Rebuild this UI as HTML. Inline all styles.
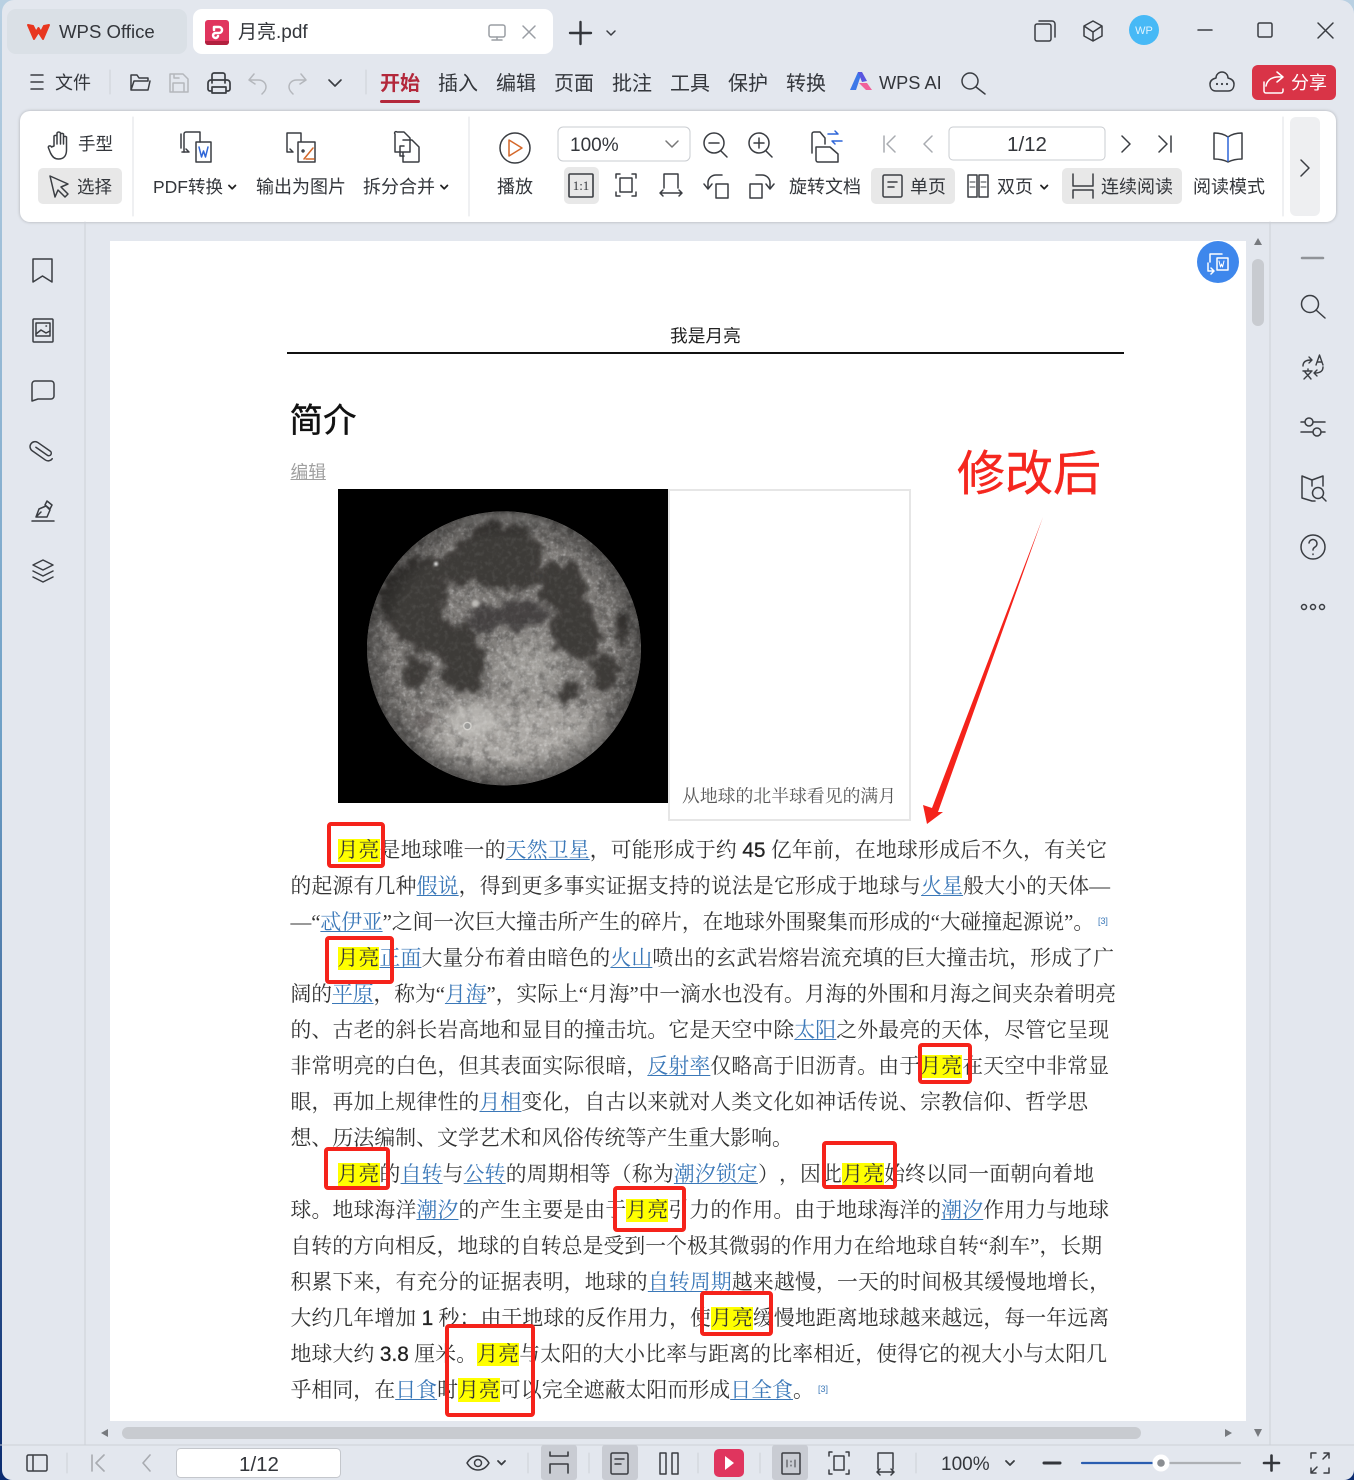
<!DOCTYPE html>
<html lang="zh-CN"><head><meta charset="utf-8"><title>月亮.pdf</title>
<style>
html,body{margin:0;padding:0}
body{width:1354px;height:1480px;overflow:hidden;position:relative;background:linear-gradient(#b9d0e2,#6ea0c6 50%,#0b2c70)}
#win{position:absolute;left:1.5px;top:0;right:0;bottom:0;background:#e3e7ee;border-radius:12px 14px 10px 10px;overflow:hidden}
.abs{position:absolute}
#card{position:absolute;left:18.5px;top:111px;width:1316px;height:111px;background:#fff;border-radius:10px;box-shadow:0 0 3px rgba(0,0,0,.25)}
#page{position:absolute;left:108.5px;top:241px;width:1136px;height:1180px;background:#fff}
svg text{font-family:"Liberation Sans","Noto Sans CJK SC",sans-serif;fill:#33363b}
.l{position:absolute;height:36px;line-height:36px;white-space:nowrap;font-family:"Liberation Serif","Noto Serif CJK SC",serif;font-size:20.8px;color:#333;text-align:justify;text-align-last:justify;text-justify:inter-character;text-spacing-trim:space-all}
.l a{color:#3b78b8;text-decoration:underline;text-underline-offset:2px;text-decoration-thickness:1px}
.l b{font-family:"Liberation Sans",sans-serif;font-weight:400;color:#222;-webkit-text-stroke:.3px #222}
.l mark{color:#333;background:#ff0}
.l sup{font-family:"Liberation Sans",sans-serif;font-size:9px;line-height:0;color:#3b78b8;vertical-align:5.5px;margin-left:4px}
.r{position:absolute;border:4px solid #f5231b;border-radius:4px;box-sizing:border-box}
</style></head><body>
<div id="win">
<div id="card"></div>
<div id="page"></div>
</div>

<!-- chrome -->
<svg class="abs" style="left:0;top:0" width="1354" height="1480" viewBox="0 0 1354 1480">
<g fill="none" stroke="#3a3d42" stroke-width="1.5" stroke-linecap="round" stroke-linejoin="round">
<!-- tabs -->
<rect x="7" y="9" width="180" height="45" rx="9" fill="#dae0e6" stroke="none"/>
<rect x="193" y="9" width="360" height="45" rx="9" fill="#fff" stroke="none"/>
<path d="M28 25l6 14 4.500-7 4.500 7 6-14-5 1-3 6-2.500-4-2.500 4-3-6z" fill="#e8361f" stroke="#e8361f" stroke-width="2"/>
<rect x="205" y="20" width="24" height="25" rx="3" fill="#e0355e" stroke="none"/>
<path d="M205 41h24v1a3 3 0 0 1-3 3h-18a3 3 0 0 1-3-3z" fill="#b3203f" stroke="none"/>
<path d="M214 30v-3h5a3 3 0 0 1 0 6h-3a2.500 2.500 0 1 0 2 3" stroke="#fff" stroke-width="2.500"/>
<g stroke="#9a9ea4"><rect x="489" y="25" width="16" height="12" rx="2"/><path d="M497 37v3M492 40h10"/><path d="M523 26l12 12M535 26l-12 12"/></g>
<path d="M570 33h21M580.500 22v22" stroke="#33363b" stroke-width="2.400"/>
<path d="M607 31l4 4 4-4"/>
<!-- window right -->
<rect x="1035" y="24" width="16" height="17" rx="2"/><path d="M1039 21h13a3 3 0 0 1 3 3v13"/>
<path d="M1093 21l9 5v10l-9 5-9-5V26zM1084 26l9 6 9-6M1093 32v9"/>
<circle cx="1144" cy="30" r="15" fill="#47b9f6" stroke="none"/>
<path d="M1198 30h14"/><rect x="1258" y="23" width="14" height="14" rx="1.500"/><path d="M1318 23l15 15M1333 23l-15 15"/>
<!-- row 2 -->
<path d="M31 75h12M31 82h12M31 89h12"/>
<path d="M110 70v24M366 70v24" stroke="#ccd0d6" stroke-width="1"/>
<path d="M131 75h6l2 3h9v3h-14l-3 9zM131 90h17l2-9M131 75v15"/>
<g stroke="#b4b7bc"><path d="M170 74h13l5 5v13h-18zM173 91v-8h11v8M174 74v4h5"/>
<path d="M254 74l-5 6 6 4M249 80h9c6 0 8 4 8 7s-2 5-4 7M301 74l5 6-6 4M306 80h-9c-6 0-8 4-8 7s2 5 4 7"/></g>
<path d="M212 83v-8a2 2 0 0 1 2-2h9a2 2 0 0 1 2 2v8M211 91h-1a2 2 0 0 1-2-2v-6a3 3 0 0 1 3-3h16a3 3 0 0 1 3 3v6a2 2 0 0 1-2 2h-1M212 87h14v6h-14z" stroke-width="1.700"/>
<path d="M329 80l6 6 6-6" stroke-width="1.600"/>
<rect x="380" y="100" width="40" height="3" rx="1.500" fill="#b3283b" stroke="none"/>
<path d="M850 90l8-18h4l-6 18z" fill="#3c78e8" stroke="none"/><path d="M858 72h4l5 9-5 1z" fill="#5a56e0" stroke="none"/><path d="M859 83h8l5 7h-6z" fill="#f0609a" stroke="none"/>
<circle cx="970" cy="81" r="8"/><path d="M976 87l9 7"/>
<path d="M1216 78a6 6 0 0 1 12 0c4 1 6 3 6 6 0 4-2 7-6 7h-12c-4 0-6-3-6-7 0-3 2-5 6-6z"/>
<circle cx="1217" cy="84" r="1.100" fill="#3a3d42" stroke="none"/><circle cx="1222" cy="84" r="1.100" fill="#3a3d42" stroke="none"/><circle cx="1227" cy="84" r="1.100" fill="#3a3d42" stroke="none"/>
<rect x="1252" y="65" width="84" height="35" rx="6" fill="#d93447" stroke="none"/>
<path d="M1264 82v9a2 2 0 0 0 2 2h15a2 2 0 0 0 2-2v-2M1266 86c1-6 6-10 16-9M1277 72l6 5-6 5" stroke="#fff"/>
<!-- toolbar -->
<path d="M133 117v99M469 117v99M1283 117v99" stroke="#dfe1e4" stroke-width="1"/>
<rect x="1290" y="117" width="30" height="99" rx="6" fill="#eeeff1" stroke="none"/><path d="M1301 160l8 8-8 8"/>
<rect x="38" y="168" width="84" height="36" rx="5" fill="#e8e8e8" stroke="none"/>
<rect x="564" y="167" width="35" height="37" rx="5" fill="#e8e8e8" stroke="none"/>
<rect x="871" y="168" width="84" height="36" rx="5" fill="#e8e8e8" stroke="none"/>
<rect x="1062" y="168" width="120" height="36" rx="5" fill="#e8e8e8" stroke="none"/>
<path d="M54 146v-10a2 2 0 0 1 3 0v8-11a2 2 0 0 1 3.500 0v11-10a2 2 0 0 1 3 0v10-7a2 2 0 0 1 3 0v13c0 6-3 9-8 9-4 0-6-2-8-6l-2-5c-1-2 2-3 3-1z"/>
<path d="M50 176l18 8-7 3 7 7-3 3-7-7-3 7z"/>
<path d="M184 152v-18a2 2 0 0 1 2-2h14v10M181 148v-14"/><path d="M182 152h7l-3-3M196 142h15v20h-15z"/><path d="M199 147l2.500 10 2-6 2 6 2.500-10" stroke="#2f66d8"/>
<path d="M287 152v-19h14v9M287 152h6l-3-3M298 142h17v20h-17z"/><path d="M304 159l9-11" stroke="#d4682a"/><path d="M303 150a1 1 0 1 0 .1 0" stroke="#3a3d42"/><path d="M306 159h8" stroke="#d4682a"/>
<path d="M395 134a1 1 0 0 1 2-2h7l6 6v14h-15zM403 140h9l7 7v14a1 1 0 0 1-1 1h-15v-10"/><path d="M404 146h-4v10h4"/>
<circle cx="515" cy="148" r="15"/><path d="M509 140l13 8-13 8z" stroke="#d4682a"/>
<rect x="558" y="127" width="132" height="34" rx="5" stroke="#c9ccd0" stroke-width="1"/><path d="M666 141l6 6 6-6" stroke="#777"/>
<circle cx="714" cy="143" r="10"/><path d="M709 143h10M721 151l6 6"/>
<circle cx="759" cy="143" r="10"/><path d="M754 143h10M759 138v10M766 151l6 6"/>
<rect x="569" y="174" width="24" height="23" rx="1" stroke-width="1.600"/>
<path d="M620 174h-4v4M632 174h4v4M620 196h-4v-4M632 196h4v-4"/><rect x="620" y="178" width="12" height="14"/>
<path d="M664 188v-14h14v14M660 193h22M663 190l-3 3 3 3M679 190l3 3-3 3"/>
<rect x="716" y="184" width="12" height="14"/><path d="M708 188v-6a8 8 0 0 1 8-7h6M704 184l4 5 4-5"/>
<rect x="750" y="184" width="12" height="14"/><path d="M770 188v-6a8 8 0 0 0-8-7h-6M766 184l4 5 4-5"/>
<path d="M812 153v-19a2 2 0 0 1 2-2h6l5 6v6M823 162h-5a2 2 0 0 1-2-2v-13h14l8 7v8z"/>
<path d="M828 134h10l-3-3M842 141h-10l3 3" stroke="#2f66d8"/>
<g stroke="#a8abb0"><path d="M884 136v16M895 136l-8 8 8 8M932 136l-8 8 8 8"/></g>
<rect x="949" y="127" width="156" height="33" rx="4" stroke="#c9ccd0" stroke-width="1"/>
<path d="M1122 136l8 8-8 8M1159 136l8 8-8 8M1171 136v16"/>
<path d="M1228 137c-4-3-9-4-14-4v26c5 0 10 1 14 3 4-2 9-3 14-3v-26c-5 0-10 1-14 4z"/><path d="M1228 137v24" stroke="#2f66d8"/>
<rect x="883" y="175" width="19" height="22" rx="1.500"/><path d="M888 182h9M888 187h6"/>
<rect x="968" y="175" width="9" height="22"/><rect x="979" y="175" width="9" height="22"/><path d="M970 182h5M970 187h5M981 182h5M981 187h5" stroke-width="1"/>
<path d="M1073 174v12h20v-12M1073 198v-8h20v8"/>
<path d="M229 185.500l3.200 3.200 3.200-3.200M441 185.500l3.200 3.200 3.200-3.200M1041 185.500l3.200 3.200 3.200-3.200" stroke="#222" stroke-width="1.800"/>
<!-- sidebars -->
<path d="M85 222v1223M1270 222v1223" stroke="#cdd1d7" stroke-width="1"/>
<path d="M33 259h19v23l-9.500-6-9.500 6z"/>
<rect x="33" y="319" width="20" height="23" rx="1"/><rect x="36" y="323" width="14" height="13"/><path d="M36 334l5-4 5 3 4-2M46 326h.5"/>
<path d="M35 381h16a3 3 0 0 1 3 3v12a3 3 0 0 1-3 3H38l-6 2v-17a3 3 0 0 1 3-3z"/>
<path d="M37 452h14a2.500 2.500 0 0 0 0-5H36a5 5 0 0 0 0 10h16a5 5 0 0 0 5-5" transform="rotate(35 43 451) translate(-2 0)"/>
<path d="M32 521h22M36 517l3-8 7-3 4 4-3 7zM36 517l5-5M47 501l5 4-2 4-5-4z"/>
<path d="M43 560l10 5-10 5-10-5zM33 571l10 5 10-5M33 577l10 5 10-5"/>
<path d="M1302 258h21" stroke="#909398" stroke-width="2.500"/>
<circle cx="1310" cy="304" r="8.500"/><path d="M1316 310l9 8"/>
<path d="M1303 366c0-4 3-6 8-6M1309 357l3 3-3 3M1323 367c0 4-3 6-8 6M1317 376l-3-3 3-3M1303 371h9M1308 369v1M1304 379l7-7M1305 372l6 7M1316 365l3.500-10 3.500 10M1317 362h5" stroke-width="1.400"/>
<path d="M1301 422h4M1313 422h12M1301 432h12M1321 432h4"/><rect x="1305" y="418" width="8" height="8" rx="4"/><rect x="1313" y="428" width="8" height="8" rx="4"/>
<path d="M1302 476l10 4 11-4v10M1302 476v22l10 3h3M1312 480v6"/><circle cx="1318" cy="493" r="5.500"/><path d="M1322 497l4 4"/>
<circle cx="1313" cy="547" r="12"/><path d="M1309 543a4 4 0 1 1 6 4c-1.500 1-2 1.500-2 3M1313 554v.5"/>
<circle cx="1304" cy="607" r="2.500"/><circle cx="1313" cy="607" r="2.500"/><circle cx="1322" cy="607" r="2.500"/>
<!-- FAB -->
<circle cx="1218" cy="262" r="22" fill="#fff" stroke="none"/><circle cx="1218" cy="262" r="21" fill="#3e87ec" stroke="none"/>
<path d="M1210 262v-8h12M1208 263v8h6M1211 268l3 3-3 3" stroke="#fff"/><rect x="1217" y="258" width="11" height="12" fill="#3e87ec" stroke="#fff"/><path d="M1219 261l1.500 6 1-3 1 3 1.500-6" stroke="#fff" stroke-width="1"/>
<!-- scrollbars -->
<rect x="122" y="1427" width="1019" height="12" rx="6" fill="#c8cbd0" stroke="none"/>
<rect x="1252" y="259" width="12" height="67" rx="6" fill="#c8cbd0" stroke="none"/>
<path d="M1254 245l4-7 4 7zM101 1433l7-4v8zM1232 1433l-7-4v8zM1254 1429h8l-4 8z" fill="#777a7e" stroke="none"/>
<!-- status -->
<path d="M0 1445h1354" stroke="#cdd1d7" stroke-width="1"/>
<rect x="541" y="1445" width="36" height="35" rx="3" fill="#c9ccd3" stroke="none"/>
<rect x="602" y="1445" width="36" height="35" rx="3" fill="#c9ccd3" stroke="none"/>
<rect x="772" y="1445" width="36" height="35" rx="3" fill="#c9ccd3" stroke="none"/>
<path d="M67 1453v20M528 1453v20M589 1453v20M698 1453v20M760 1453v20M916 1453v20" stroke="#cdd1d7" stroke-width="1"/>
<rect x="27" y="1455" width="20" height="16" rx="1.500"/><path d="M33 1456v14"/>
<g stroke="#a8abb0" stroke-width="1.600"><path d="M92 1455v16M104 1455l-8 8 8 8M150 1455l-7 8 7 8"/></g>
<rect x="176.500" y="1448.500" width="164" height="29" rx="4" fill="#fff" stroke="#c4c7cc" stroke-width="1"/>
<path d="M467 1463c3-5 7-7 11-7s8 2 11 7c-3 5-7 7-11 7s-8-2-11-7z"/><circle cx="478" cy="1463" r="3.500"/>
<path d="M498 1461l3.500 3.500 3.500-3.500" stroke-width="1.800"/>
<path d="M550 1452v4h18v-4M550 1473v-9h18v9" stroke-width="1.600"/>
<rect x="611" y="1453" width="17" height="21" rx="1.500"/><path d="M615 1459h9M615 1464h6"/>
<rect x="660" y="1453" width="6" height="21"/><rect x="672" y="1453" width="6" height="21"/>
<rect x="714" y="1449" width="30" height="28" rx="5" fill="#e0355e" stroke="none"/><path d="M725 1456l9 7-9 7z" fill="#fff" stroke="none"/>
<rect x="782" y="1453" width="18" height="21" rx="1"/><path d="M787 1460v7M795 1460v7M791 1461v1M791 1465v1" stroke-width="1"/>
<path d="M832 1452h-3v4M846 1452h3v4M832 1474h-3v-4M846 1474h3v-4"/><rect x="834" y="1456" width="10" height="14"/>
<path d="M878 1469v-16h15v16M877 1472h17M880 1469l-3 3 3 3M891 1469l3 3-3 3"/>
<path d="M1006 1461l4 4 4-4" stroke-width="1.800"/>
<path d="M1044 1463h16" stroke="#33363b" stroke-width="3"/>
<path d="M1082 1463h72" stroke="#2a5db0" stroke-width="2.200"/><path d="M1168 1463h72" stroke="#adb0b4" stroke-width="2.200"/>
<circle cx="1161" cy="1463" r="8.500" fill="#fff" stroke="none"/><circle cx="1161" cy="1463" r="3.800" fill="#8b8e92" stroke="none"/>
<path d="M1264 1463h15M1271.500 1455.500v15" stroke="#33363b" stroke-width="2.600"/>
<path d="M1311 1458v-5h5M1324 1453h5l-6 6M1329 1453v5M1316 1473h-5l6-6M1311 1473v-5M1329 1468v5h-5" stroke-width="1.500"/>
</g>
<!-- chrome text -->
<text x="59" y="38" font-size="18.600">WPS Office</text>
<text x="238" y="38" font-size="19">月亮.pdf</text>
<text x="55" y="89" font-size="18">文件</text>
<text x="380" y="90" font-size="20" font-weight="700" style="fill:#b3283b">开始</text>
<text x="438" y="90" font-size="20">插入</text><text x="496" y="90" font-size="20">编辑</text><text x="554" y="90" font-size="20">页面</text><text x="612" y="90" font-size="20">批注</text><text x="670" y="90" font-size="20">工具</text><text x="728" y="90" font-size="20">保护</text><text x="786" y="90" font-size="20">转换</text>
<text x="879" y="89" font-size="18.200">WPS AI</text>
<text x="1291" y="89" font-size="18" style="fill:#fff">分享</text>
<text x="1144" y="34" font-size="11" text-anchor="middle" style="fill:#dff3ff">WP</text>
<text x="78" y="150" font-size="17.500">手型</text><text x="77" y="193" font-size="17.500">选择</text>
<text x="153" y="193" font-size="17.500">PDF转换</text><text x="256" y="193" font-size="18">输出为图片</text><text x="363" y="193" font-size="18">拆分合并</text><text x="497" y="193" font-size="18">播放</text>
<text x="570" y="151" font-size="19">100%</text>
<text x="581" y="190" font-size="13" text-anchor="middle" style="font-family:'Liberation Serif',serif">1:1</text>
<text x="789" y="193" font-size="18">旋转文档</text><text x="910" y="193" font-size="18">单页</text><text x="997" y="193" font-size="18">双页</text><text x="1101" y="193" font-size="18">连续阅读</text><text x="1193" y="193" font-size="18">阅读模式</text>
<text x="1027" y="151" font-size="20.500" text-anchor="middle">1/12</text>
<text x="259" y="1471" font-size="20.500" text-anchor="middle">1/12</text>
<text x="941" y="1470" font-size="19">100%</text>
</svg>

<!-- page contents -->
<div class="abs" style="left:670px;top:324px;font:17.700px/24px 'Liberation Sans','Noto Sans CJK SC',sans-serif;color:#222">我是月亮</div>
<div class="abs" style="left:287px;top:352px;width:837px;height:2px;background:#111"></div>
<div class="abs" style="left:289.500px;top:398px;font:33.500px/48px 'Liberation Sans','Noto Sans CJK SC',sans-serif;color:#111;-webkit-text-stroke:.4px #111">简介</div>
<div class="abs" style="left:290.500px;top:460px;font:17.700px/24px 'Liberation Sans','Noto Sans CJK SC',sans-serif;color:#a0a0a0;text-decoration:underline">编辑</div>
<div class="abs" style="left:957px;top:440px;font:48px/70px 'Liberation Sans','Noto Sans CJK SC',sans-serif;color:#f5271f;-webkit-text-stroke:.4px #f5271f">修改后</div>

<div class="abs" style="left:668px;top:489px;width:239px;height:328px;border:2px solid #e6e6e6"></div>
<div class="abs" style="left:682px;top:784px;font:17.850px/24px 'Liberation Serif','Noto Serif CJK SC',serif;color:#555">从地球的北半球看见的满月</div>

<!-- moon -->
<svg class="abs" style="left:330px;top:480px" width="350" height="330" viewBox="0 0 1050 990">
<defs>
<clipPath id="mc"><circle cx="522" cy="505" r="411"/></clipPath>
<filter id="rough" x="-20%" y="-20%" width="140%" height="140%"><feTurbulence type="fractalNoise" baseFrequency=".028" numOctaves="4" seed="3" result="t"/><feDisplacementMap in="SourceGraphic" in2="t" scale="70" xChannelSelector="R" yChannelSelector="G"/><feGaussianBlur stdDeviation="6"/></filter>
<filter id="b2" x="-30%" y="-30%" width="160%" height="160%"><feGaussianBlur stdDeviation="3"/></filter>
<filter id="b6" x="-30%" y="-30%" width="160%" height="160%"><feGaussianBlur stdDeviation="8"/></filter>
<filter id="b30" x="-30%" y="-30%" width="160%" height="160%"><feGaussianBlur stdDeviation="35"/></filter>
<filter id="nz" x="0" y="0" width="100%" height="100%"><feTurbulence type="fractalNoise" baseFrequency=".07" numOctaves="4" seed="7"/><feColorMatrix values="0 0 0 0 1 0 0 0 0 1 0 0 0 0 1 0 0 0 2.400 -1.050"/></filter>
<filter id="nd" x="0" y="0" width="100%" height="100%"><feTurbulence type="fractalNoise" baseFrequency=".035" numOctaves="4" seed="21"/><feColorMatrix values="0 0 0 0 0 0 0 0 0 0 0 0 0 0 0 0 0 0 2.600 -1.150"/></filter>
<filter id="sp" x="0" y="0" width="100%" height="100%"><feTurbulence type="fractalNoise" baseFrequency=".14" numOctaves="2" seed="11"/><feColorMatrix values="0 0 0 0 1 0 0 0 0 1 0 0 0 0 1 0 0 0 12 -8"/><feGaussianBlur stdDeviation="1.500"/></filter>
<radialGradient id="ed" cx="50%" cy="50%" r="50%"><stop offset=".8" stop-color="#000" stop-opacity="0"/><stop offset="1" stop-color="#000" stop-opacity=".38"/></radialGradient>
</defs>
<rect x="24" y="27" width="990" height="942" fill="#000"/>
<g clip-path="url(#mc)">
<rect x="100" y="90" width="850" height="840" fill="#7d7a77"/>
<ellipse cx="560" cy="770" rx="300" ry="120" fill="#a8a5a1" filter="url(#b30)"/>
<ellipse cx="600" cy="560" rx="110" ry="80" fill="#a3a09c" filter="url(#b30)"/>
<rect x="100" y="90" width="850" height="840" filter="url(#nd)" opacity=".25"/>
<rect x="100" y="90" width="850" height="840" filter="url(#nz)" opacity=".2"/>
<rect x="100" y="90" width="850" height="840" filter="url(#sp)" opacity=".4"/>
<g filter="url(#rough)" fill="#3c3a39">
<path d="M340 230L400 175 470 130 590 145 640 205 630 290 570 335 490 325 430 310 390 320 330 300z"/>
<path d="M165 310L240 240 330 240 350 330 335 420 400 430 440 450 460 530 460 630 410 640 355 620 340 540 275 510 195 470 155 390z"/>
<path d="M380 400L540 370 640 370 650 420 560 450 470 455 420 440z" opacity=".85"/>
<ellipse cx="255" cy="565" rx="36" ry="44"/>
<ellipse cx="695" cy="315" rx="70" ry="72"/>
<ellipse cx="740" cy="455" rx="78" ry="86"/>
<ellipse cx="825" cy="575" rx="40" ry="60"/>
<ellipse cx="873" cy="447" rx="22" ry="44"/>
<ellipse cx="715" cy="630" rx="28" ry="34"/>
<ellipse cx="280" cy="725" rx="30" ry="30" opacity=".4"/>
<ellipse cx="135" cy="410" rx="9" ry="13"/>
</g>
<g fill="none" stroke="#dcdad6" stroke-width="3" opacity=".42" filter="url(#b2)">
<path d="M412 738L365 630M412 738L385 670M412 738L340 800M412 738L470 690M412 738L700 690M412 738L630 715M412 738L760 760M412 738L680 790M412 738L440 900M412 738L390 860M412 738L610 880M412 738L540 840"/>
</g>
<ellipse cx="430" cy="720" rx="70" ry="50" fill="#c6c4c0" opacity=".5" filter="url(#b6)"/>
<path d="M395 130Q520 85 660 135" stroke="#b0aeaa" stroke-width="14" fill="none" filter="url(#b6)" opacity=".7"/>
<circle cx="412" cy="738" r="11" fill="#9a9a98" stroke="#d6d4d0" stroke-width="4"/>
<circle cx="318" cy="252" r="6" fill="#eee" filter="url(#b2)"/>
<circle cx="436" cy="370" r="11" fill="#bdbbb7" filter="url(#b2)"/>
<rect x="100" y="90" width="850" height="840" filter="url(#nz)" opacity=".08"/>
<circle cx="522" cy="505" r="411" fill="url(#ed)"/>
</g>
</svg>

<!-- arrow -->
<svg class="abs" style="left:900px;top:500px" width="160" height="340" viewBox="900 500 160 340">
<path d="M1043 517L938 812 943 812 927 824 923 805 932 808z" fill="#f5231b"/>
</svg>

<!-- body text -->
<div class="l" style="left:337.500px;top:833px;width:769.500px"><mark>月亮</mark>是地球唯一的<a>天然卫星</a>，可能形成于约 <b>45</b> 亿年前，在地球形成后不久，有关它</div>
<div class="l" style="left:290.500px;top:869px;width:819.500px">的起源有几种<a>假说</a>，得到更多事实证据支持的说法是它形成于地球与<a>火星</a>般大小的天体—</div>
<div class="l" style="left:290.500px;top:905px;text-align:left;text-align-last:left;letter-spacing:-.07px">—“<a>忒伊亚</a>”之间一次巨大撞击所产生的碎片，在地球外围聚集而形成的“大碰撞起源说”。<sup>[3]</sup></div>
<div class="l" style="left:337.500px;top:941px;width:776.500px"><mark>月亮</mark><a>正面</a>大量分布着由暗色的<a>火山</a>喷出的玄武岩熔岩流充填的巨大撞击坑，形成了广</div>
<div class="l" style="left:290.500px;top:977px;width:825.500px;letter-spacing:-.12px">阔的<a>平原</a>，称为“<a>月海</a>”，实际上“月海”中一滴水也没有。月海的外围和月海之间夹杂着明亮</div>
<div class="l" style="left:290.500px;top:1013px;width:818.500px">的、古老的斜长岩高地和显目的撞击坑。它是天空中除<a>太阳</a>之外最亮的天体，尽管它呈现</div>
<div class="l" style="left:290.500px;top:1049px;width:818.500px">非常明亮的白色，但其表面实际很暗，<a>反射率</a>仅略高于旧沥青。由于<mark>月亮</mark>在天空中非常显</div>
<div class="l" style="left:290.500px;top:1085px;width:797.500px">眼，再加上规律性的<a>月相</a>变化，自古以来就对人类文化如神话传说、宗教信仰、哲学思</div>
<div class="l" style="left:290.500px;top:1120px;text-align:left;text-align-last:left;font-size:20.95px">想、历法编制、文学艺术和风俗传统等产生重大影响。</div>
<div class="l" style="left:337.500px;top:1157px;width:756.500px"><mark>月亮</mark>的<a>自转</a>与<a>公转</a>的周期相等（称为<a>潮汐锁定</a>），因此<mark>月亮</mark>始终以同一面朝向着地</div>
<div class="l" style="left:290.500px;top:1193px;width:818.500px">球。地球海洋<a>潮汐</a>的产生主要是由于<mark>月亮</mark>引力的作用。由于地球海洋的<a>潮汐</a>作用力与地球</div>
<div class="l" style="left:290.500px;top:1229px;width:811.500px">自转的方向相反，地球的自转总是受到一个极其微弱的作用力在给地球自转“刹车”，长期</div>
<div class="l" style="left:290.500px;top:1265px;width:819.500px">积累下来，有充分的证据表明，地球的<a>自转周期</a>越来越慢，一天的时间极其缓慢地增长，</div>
<div class="l" style="left:290.500px;top:1301px;width:818.500px">大约几年增加 <b>1</b> 秒；由于地球的反作用力，使<mark>月亮</mark>缓慢地距离地球越来越远，每一年远离</div>
<div class="l" style="left:290.500px;top:1337px;width:816.500px">地球大约 <b>3.8</b> 厘米。<mark>月亮</mark>与太阳的大小比率与距离的比率相近，使得它的视大小与太阳几</div>
<div class="l" style="left:290.500px;top:1372px;text-align:left;text-align-last:left;font-size:20.95px">乎相同，在<a>日食</a>时<mark>月亮</mark>可以完全遮蔽太阳而形成<a>日全食</a>。<sup>[3]</sup></div>

<!-- red rectangles -->
<div class="r" style="left:327px;top:822px;width:58px;height:46px"></div>
<div class="r" style="left:325px;top:936px;width:69px;height:48px"></div>
<div class="r" style="left:918px;top:1043px;width:54px;height:41px"></div>
<div class="r" style="left:324px;top:1147px;width:66px;height:43px"></div>
<div class="r" style="left:822px;top:1141px;width:75px;height:48px"></div>
<div class="r" style="left:613px;top:1186px;width:73px;height:46px"></div>
<div class="r" style="left:700px;top:1291px;width:73px;height:45px"></div>
<div class="r" style="left:445px;top:1324px;width:90px;height:93px"></div>
</body></html>
